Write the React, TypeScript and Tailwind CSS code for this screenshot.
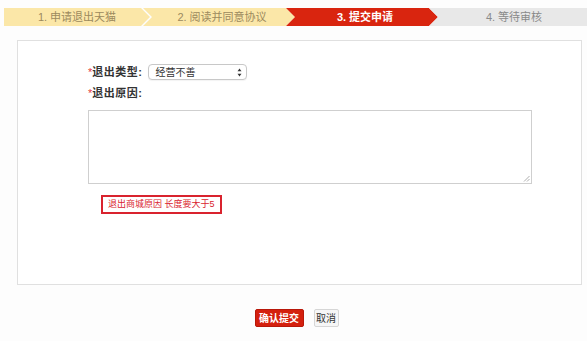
import React from "react";

const font = { fontFamily: '"Liberation Sans", "Noto Sans CJK SC", sans-serif' };

function Steps() {
  return (
    <div className="flex h-[18px] pl-[4px] pt-0">
      <div className="relative flex-1 bg-[#fbe7a8] text-[#9b8a5e] text-[11px] flex items-center justify-center [clip-path:polygon(0_0,calc(100%-9px)_0,100%_50%,calc(100%-9px)_100%,0_100%)]">
        1. 申请退出天猫
      </div>
      <div className="relative -ml-[7px] flex-1 bg-[#fbe7a8] text-[#9b8a5e] text-[11px] flex items-center justify-center pl-[6px] [clip-path:polygon(0_0,calc(100%-9px)_0,100%_50%,calc(100%-9px)_100%,0_100%,9px_50%)]">
        2. 阅读并同意协议
      </div>
      <div className="relative -ml-[9px] flex-1 bg-[#d9250f] text-white font-bold text-[11px] flex items-center justify-center pl-[6px] [clip-path:polygon(0_0,calc(100%-9px)_0,100%_50%,calc(100%-9px)_100%,0_100%,9px_50%)]">
        3. 提交申请
      </div>
      <div className="relative -ml-[9px] flex-1 bg-[#e8e8e8] text-[#8a8a8a] text-[11px] flex items-center justify-center pl-[12px] [clip-path:polygon(0_0,100%_0,100%_100%,0_100%,9px_50%)]">
        4. 等待审核
      </div>
    </div>
  );
}

export default function App() {
  return (
    <div className="w-[587px] h-[341px] bg-[#fdfdfd] overflow-hidden pt-[8px]" style={font}>
      <Steps />
      <div className="ml-[17px] mr-[5px] mt-[14px] h-[245px] border border-[#e0e0e0] bg-white pl-[70px] pt-[23px]">
        <div className="flex items-center h-[16px]">
          <span className="text-[#e4393c] text-[11px] leading-none">*</span>
          <span className="text-[#333] text-[11px] font-bold tracking-[0.5px]">退出类型:</span>
          <div className="ml-[6px] w-[99px] h-[16px] rounded-[4px] border border-[#c8c8c8] bg-white flex items-center justify-between pl-[6px] pr-[4px] shadow-[0_1px_1px_rgba(0,0,0,0.05)]">
            <span className="text-[10px] text-[#333]">经营不善</span>
            <svg width="5" height="9" viewBox="0 0 5 9">
              <path d="M2.5 0.5 L4.5 3.3 L0.5 3.3 Z" fill="#333" />
              <path d="M2.5 8.5 L4.5 5.7 L0.5 5.7 Z" fill="#333" />
            </svg>
          </div>
        </div>
        <div className="flex items-center h-[16px] mt-[5px]">
          <span className="text-[#e4393c] text-[11px] leading-none">*</span>
          <span className="text-[#333] text-[11px] font-bold tracking-[0.5px]">退出原因:</span>
        </div>
        <div className="relative mt-[9px] w-[444px] h-[74px] border border-[#cfcfcf] bg-white">
          <svg className="absolute right-[1px] bottom-[1px]" width="7" height="7" viewBox="0 0 7 7">
            <path d="M6.5 1 L1 6.5 M6.5 4 L4 6.5" stroke="#999" strokeWidth="0.8" />
          </svg>
        </div>
        <div className="mt-[11px] ml-[13px] inline-flex items-center h-[19px] border-2 border-[#d9232e] px-[5px]">
          <span className="text-[9px] text-[#d9232e] whitespace-nowrap">退出商城原因 长度要大于5</span>
        </div>
      </div>
      <div className="flex justify-center gap-[10px] mt-[24px] pl-[6px]">
        <div className="w-[49px] h-[18px] rounded-[2px] bg-[#d4200e] border border-[#b8180a] text-white text-[10px] font-bold flex items-center justify-center">
          确认提交
        </div>
        <div className="w-[25px] h-[18px] rounded-[2px] bg-[#f6f6f6] border border-[#d6d6d6] text-[#333] text-[10px] flex items-center justify-center">
          取消
        </div>
      </div>
    </div>
  );
}
